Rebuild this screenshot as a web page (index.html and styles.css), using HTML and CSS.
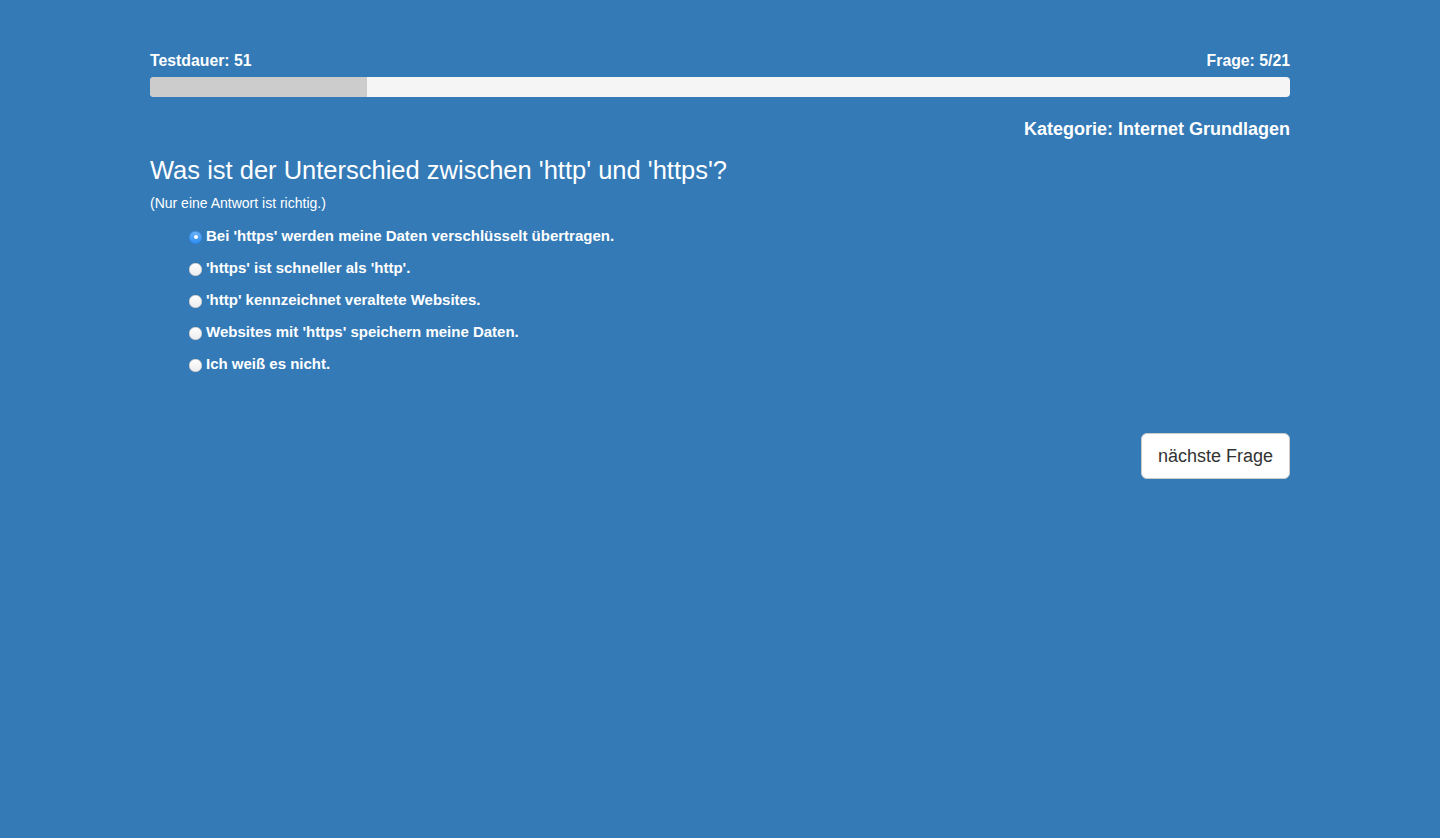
FILE: index.html
```html
<!DOCTYPE html>
<html lang="de">
<head>
<meta charset="utf-8">
<title>Test</title>
<link rel="stylesheet" href="styles.css">
</head>
<body>
<div class="container">
  <div class="status">
    <span>Testdauer: 51</span>
    <span>Frage: 5/21</span>
  </div>
  <div class="progress"><div class="progress-bar" style="width: 19.05%"></div></div>
  <div class="category">Kategorie: Internet Grundlagen</div>
  <h3 class="question">Was ist der Unterschied zwischen 'http' und 'https'?</h3>
  <div class="hint">(Nur eine Antwort ist richtig.)</div>
  <ul class="answers">
    <li class="answer"><span class="radio checked"></span><span>Bei 'https' werden meine Daten verschlüsselt übertragen.</span></li>
    <li class="answer"><span class="radio"></span><span>'https' ist schneller als 'http'.</span></li>
    <li class="answer"><span class="radio"></span><span>'http' kennzeichnet veraltete Websites.</span></li>
    <li class="answer"><span class="radio"></span><span>Websites mit 'https' speichern meine Daten.</span></li>
    <li class="answer"><span class="radio"></span><span>Ich weiß es nicht.</span></li>
  </ul>
  <div class="actions">
    <button class="btn">nächste Frage</button>
  </div>
</div>
</body>
</html>
```
FILE: styles.css
```css
html, body {
  margin: 0;
  padding: 0;
  background: #337ab7;
  color: #fff;
  font-family: "Liberation Sans", Arial, Helvetica, sans-serif;
  font-size: 14px;
  line-height: 20px;
}
.container {
  width: 1140px;
  margin: 0 auto;
  padding-top: 50px;
}
.status {
  display: flex;
  justify-content: space-between;
  font-weight: bold;
  font-size: 15.8px;
  line-height: 22px;
}
.progress {
  margin-top: 5px;
  height: 20px;
  background: #f5f5f5;
  border-radius: 4px;
  overflow: hidden;
}
.progress-bar {
  height: 100%;
  background: #cccccc;
}
.category {
  margin-top: 20px;
  text-align: right;
  font-weight: bold;
  font-size: 18px;
  line-height: 24px;
}
.question {
  margin: 14px 0 0;
  font-size: 25.5px;
  font-weight: normal;
  line-height: 30px;
}
.hint {
  margin-top: 10px;
  font-size: 14px;
  line-height: 16px;
}
.answers {
  list-style: none;
  margin: 9px 0 0;
  padding: 0 0 0 39px;
}
.answer {
  display: flex;
  align-items: center;
  gap: 4px;
  height: 32px;
  font-weight: bold;
  font-size: 15px;
}
.radio {
  width: 13px;
  height: 13px;
  border-radius: 50%;
  background: linear-gradient(#ffffff, #ececec);
  box-shadow: inset 0 0 0 0.5px #b5b5b5;
  position: relative;
  flex: none;
  margin-top: 2px;
}
.radio.checked {
  background: linear-gradient(#6cb3fa, #2a8cf0);
  box-shadow: inset 0 0 0 0.5px #2b7bd8;
}
.radio.checked::after {
  content: "";
  position: absolute;
  left: 4.5px;
  top: 4.5px;
  width: 4px;
  height: 4px;
  border-radius: 50%;
  background: #fff;
}
.actions {
  display: flex;
  justify-content: flex-end;
  margin-top: 53px;
}
.btn {
  font-family: "Liberation Sans", Arial, Helvetica, sans-serif;
  font-size: 18px;
  line-height: 24px;
  color: #333;
  background: #fff;
  border: 1px solid #ccc;
  border-radius: 6px;
  padding: 10px 0;
  width: 149px;
  height: 46px;
  white-space: nowrap;
  text-align: center;
}
```
